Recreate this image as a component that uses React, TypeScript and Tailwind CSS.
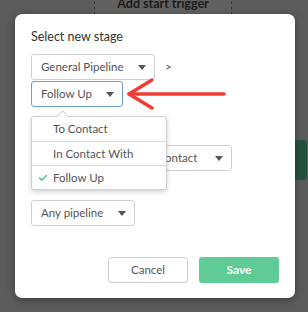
import { Check } from "lucide-react"

const Caret = () => (
    <span className="w-0 h-0 border-l-[4px] border-r-[4px] border-t-[5px] border-l-transparent border-r-transparent border-t-[#555]" />
)

const Select = (props: { label: string; className?: string }) => {
    const { label, className } = props
    return (
        <div className={"flex items-center justify-between h-[26px] pl-[9px] pr-[8px] bg-white border rounded-[3px] text-[11.5px] text-[#555] " + (className ?? "border-[#cfcfcf]")}>
            <span>{label}</span>
            <Caret />
        </div>
    )
}

const StageMenu = () => {
    const items = ["To Contact", "In Contact With", "Follow Up"]
    return (
        <div className="absolute left-4 top-[102px] w-[136px] bg-white border border-[#cfcfcf] rounded-[3px] shadow-[0_2px_5px_rgba(0,0,0,0.18)]">
            <span className="absolute left-[26px] -top-[5px] w-[9px] h-[9px] bg-white border-l border-t border-[#cfcfcf] rotate-45" />
            {items.map((item, index) => {
                const active = item === "Follow Up"
                return (
                    <div key={index} className={"relative flex items-center h-[24px] text-[11.5px] text-[#555] " + (index > 0 ? "border-t border-[#d9d9d9]" : "")}>
                        <span className="w-[21px] flex justify-end pr-[5px]">
                            {active && <Check size={10} strokeWidth={4} className="text-[#5cc994]" />}
                        </span>
                        <span>{item}</span>
                    </div>
                )
            })}
        </div>
    )
}

export default function App() {
    return (
        <div className="relative w-[308px] h-[312px] overflow-hidden bg-[#e5e5e5] font-['Lato',sans-serif]">
            {/* page behind the overlay */}
            <div className="ml-[94px] w-[138px] h-[40px] -mt-[4px] border-x border-dashed border-[#8a8a8a] bg-[#f3f3f3] text-center text-[12.5px] leading-[16px] font-bold text-[#4a4a4a]">
                Add start trigger
            </div>
            <div className="ml-[248px] mt-[104px] w-[59px] h-[40px] rounded-[4px] bg-[#5fcc98]" />

            <div className="absolute inset-0 bg-black/60" />

            {/* modal */}
            <div className="absolute left-[15px] top-[14px] w-[280px] h-[284px] bg-white rounded-[7px] shadow-[0_2px_8px_rgba(0,0,0,0.35)] px-4 pt-[14px]">
                <h1 className="h-[18px] leading-[18px] text-[12.5px] text-[#333]">Select new stage</h1>
                <div className="flex items-center mt-[8px]">
                    <Select label="General Pipeline" className="w-[124px] border-[#cfcfcf]" />
                    <span className="ml-[10px] text-[11.5px] text-[#555]">&gt;</span>
                </div>
                <Select label="Follow Up" className="w-[92px] mt-[1px] border-[#6a9fd6]" />
                <Select label="In Contact" className="w-[97px] ml-[104px] mt-[38px] border-[#cfcfcf]" />
                <Select label="Any pipeline" className="w-[104px] mt-[29px] border-[#cfcfcf]" />
                <div className="flex justify-end gap-[11px] mt-[31px]">
                    <button className="w-[80px] h-[26px] rounded-[3px] border border-[#cfcfcf] bg-white text-[11.5px] text-[#555]">Cancel</button>
                    <button className="w-[80px] h-[26px] rounded-[3px] bg-[#5fcc98] text-[12px] font-bold text-white">Save</button>
                </div>
                <StageMenu />
            </div>

            {/* annotation arrow */}
            <svg className="absolute left-0 top-0" width="308" height="312">
                <g stroke="#f03c33" strokeWidth="3.5" strokeLinecap="round" strokeLinejoin="round" fill="none">
                    <path d="M129 94 L224 94" />
                    <path d="M152 80 L129 94 L152 108" />
                </g>
            </svg>
        </div>
    )
}
